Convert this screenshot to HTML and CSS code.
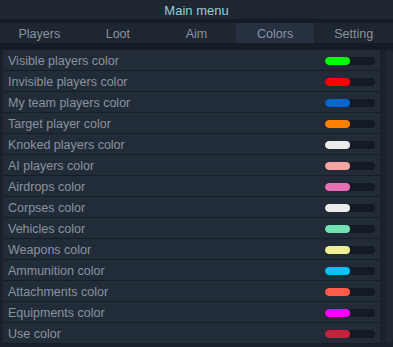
FILE: index.html
```html
<!DOCTYPE html>
<html lang="en">
<head>
	<meta charset="UTF-8">
	<title>Main menu</title>
	<link rel="stylesheet" href="styles.css">
</head>
<body>

	<!-- Title -->
	<div class="title">Main menu</div>

	<!-- Tabs -->
	<nav class="tabs">
		<div class="tab">Players</div>
		<div class="tab">Loot</div>
		<div class="tab">Aim</div>
		<div class="tab active">Colors</div>
		<div class="tab">Setting</div>
	</nav>

	<main class="content">
		<div class="list">
			<div class="row"><span>Visible players color</span><div class="swatch"><i style="background:#00ff00"></i></div></div>
			<div class="row"><span>Invisible players color</span><div class="swatch"><i style="background:#ff0000"></i></div></div>
			<div class="row"><span>My team players color</span><div class="swatch"><i style="background:#0066cc"></i></div></div>
			<div class="row"><span>Target player color</span><div class="swatch"><i style="background:#ff8000"></i></div></div>
			<div class="row"><span>Knoked players color</span><div class="swatch"><i style="background:#ebebeb"></i></div></div>
			<div class="row"><span>AI players color</span><div class="swatch"><i style="background:#f4a3a3"></i></div></div>
			<div class="row"><span>Airdrops color</span><div class="swatch"><i style="background:#ea6fb4"></i></div></div>
			<div class="row"><span>Corpses color</span><div class="swatch"><i style="background:#ebebeb"></i></div></div>
			<div class="row"><span>Vehicles color</span><div class="swatch"><i style="background:#72e2b2"></i></div></div>
			<div class="row"><span>Weapons color</span><div class="swatch"><i style="background:#f2f096"></i></div></div>
			<div class="row"><span>Ammunition color</span><div class="swatch"><i style="background:#00c3ff"></i></div></div>
			<div class="row"><span>Attachments color</span><div class="swatch"><i style="background:#ff5a4a"></i></div></div>
			<div class="row"><span>Equipments color</span><div class="swatch"><i style="background:#ff00ff"></i></div></div>
			<div class="row"><span>Use color</span><div class="swatch"><i style="background:#c8203a"></i></div></div>
		</div>

		<!-- Scrollbar -->
		<div class="scrollbar"></div>
	</main>

</body>
</html>
```

FILE: styles.css
```css
* {
	box-sizing: border-box;
}

html,
body {
	margin: 0;
	width: 100%;
	height: 100%;
}

body {
	background-color: #1a212b;
	font-family: 'Liberation Sans', Arial, sans-serif;
	overflow: hidden;
}

.title {
	height: 23px;
	padding-top: 1px;
	line-height: 19px;
	text-align: center;
	color: #8fd0d8;
	font-size: 13px;
	background-color: #1e2631;
	border-bottom: 4px solid #161c25;
}

.tabs {
	display: flex;
	height: 27px;
	background-color: #1e2631;
	border-bottom: 7px solid #161c25;
}

.tab {
	flex: 1;
	text-align: center;
	padding-top: 1px;
	line-height: 20px;
	font-size: 12.5px;
	color: #8a94a0;
}

.tab.active {
	background-color: #263040;
}

.content {
	display: flex;
	gap: 5px;
	padding-left: 3px;
}

.list {
	width: 377px;
}

.row {
	display: flex;
	align-items: center;
	justify-content: space-between;
	height: 21px;
	padding: 1px 5px 0;
	background-color: #222c39;
	border-bottom: 1px solid #161d26;
	color: #8a939e;
	font-size: 12.5px;
}

.swatch {
	width: 50px;
	height: 8px;
	border-radius: 4px;
	background-color: #131a23;
	overflow: hidden;
}

.swatch i {
	display: block;
	width: 25px;
	height: 100%;
	border-radius: 4px;
}

.scrollbar {
	width: 8px;
	height: 293px;
	border-radius: 4px;
	background-color: #1f2733;
}
```
